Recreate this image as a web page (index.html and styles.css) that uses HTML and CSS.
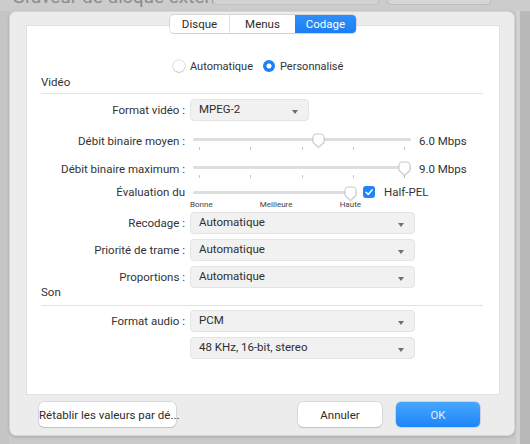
FILE: index.html
```html
<!DOCTYPE html>
<html lang="fr">
<head>
<meta charset="utf-8">
<title>Codage</title>
<link rel="stylesheet" href="styles.css">
</head>
<body>
<div class="screen">
  <div class="behind">
    <span class="bg-title">Graveur de disque externe…</span>
    <span class="bg-field"></span>
    <span class="bg-btn"></span>
  </div>
  <div class="sheet">
    <div class="tabs">
      <div class="tabgroup">
        <span class="tab t1">Disque</span>
        <span class="tab t2">Menus</span>
        <span class="tab t3 active">Codage</span>
      </div>
    </div>
    <div class="panel">
      <div class="radios">
        <span class="radio"></span><span class="rlabel">Automatique</span>
        <span class="radio on"></span><span class="rlabel">Personnalisé</span>
      </div>
      <div class="section">Vidéo</div>
      <div class="sep"></div>

      <div class="row r-format">
        <span class="label">Format vidéo :</span>
        <div class="select short"><span>MPEG-2</span><i class="arrow"></i></div>
      </div>

      <div class="row srow s1">
        <span class="label">Débit binaire moyen :</span>
        <div class="slider wide">
          <div class="track"></div>
          <div class="ticks"><i></i><i></i><i></i><i></i><i></i></div>
          <svg class="thumb" style="left:119px" width="13" height="15" viewBox="0 0 13 15"><path d="M1,4 Q1,1 4,1 H9 Q12,1 12,4 V9 L6.5,14 L1,9 Z" fill="#fff" stroke="#c9c9c9" stroke-width="1"/></svg>
        </div>
        <span class="value">6.0 Mbps</span>
      </div>

      <div class="row srow s2">
        <span class="label">Débit binaire maximum :</span>
        <div class="slider wide">
          <div class="track"></div>
          <div class="ticks"><i></i><i></i><i></i><i></i><i></i></div>
          <svg class="thumb" style="left:205px" width="13" height="15" viewBox="0 0 13 15"><path d="M1,4 Q1,1 4,1 H9 Q12,1 12,4 V9 L6.5,14 L1,9 Z" fill="#fff" stroke="#c9c9c9" stroke-width="1"/></svg>
        </div>
        <span class="value">9.0 Mbps</span>
      </div>

      <div class="row srow s3">
        <span class="label">Évaluation du</span>
        <div class="slider narrow">
          <div class="track"></div>
          <div class="marks"><span>Bonne</span><span>Meilleure</span><span>Haute</span></div>
          <svg class="thumb" style="left:151px" width="13" height="15" viewBox="0 0 13 15"><path d="M1,4 Q1,1 4,1 H9 Q12,1 12,4 V9 L6.5,14 L1,9 Z" fill="#fff" stroke="#c9c9c9" stroke-width="1"/></svg>
        </div>
        <span class="check"><svg width="12" height="12" viewBox="0 0 12 12"><path d="M3,6.2 L5.2,8.4 L9.2,3.8" fill="none" stroke="#fff" stroke-width="1.5" stroke-linecap="round" stroke-linejoin="round"/></svg></span>
        <span class="clabel">Half-PEL</span>
      </div>

      <div class="row r-sel first">
        <span class="label">Recodage :</span>
        <div class="select long"><span>Automatique</span><i class="arrow"></i></div>
      </div>
      <div class="row r-sel">
        <span class="label">Priorité de trame :</span>
        <div class="select long"><span>Automatique</span><i class="arrow"></i></div>
      </div>
      <div class="row r-sel">
        <span class="label">Proportions :</span>
        <div class="select long"><span>Automatique</span><i class="arrow"></i></div>
      </div>

      <div class="section son">Son</div>
      <div class="sep sep2"></div>

      <div class="row r-sel audio">
        <span class="label">Format audio :</span>
        <div class="select long"><span>PCM</span><i class="arrow"></i></div>
      </div>
      <div class="row r-sel">
        <span class="label"></span>
        <div class="select long"><span>48 KHz, 16-bit, stereo</span><i class="arrow"></i></div>
      </div>
    </div>
    <div class="buttons">
      <button class="btn reset">Rétablir les valeurs par dé...</button>
      <button class="btn cancel">Annuler</button>
      <button class="btn ok">OK</button>
    </div>
  </div>
</div>
</body>
</html>
```

FILE: styles.css
```css
* { box-sizing: border-box; }
html, body { margin: 0; padding: 0; }
body {
  width: 530px;
  height: 444px;
  overflow: hidden;
  font-family: Roboto, "Noto Sans", "Liberation Sans", sans-serif;
  font-size: 11.5px;
  color: #333;
  background: linear-gradient(to right, #c5c5c5 0, #c5c5c5 9px, #cacaca 9px, #cacaca 516px, #d2d2d2 516px, #d2d2d2 520px, #b9b9b9 520px);
}
.screen { width: 530px; height: 444px; }

.behind {
  height: 11px;
  overflow: hidden;
  display: flex;
  background: #cccccc;
}
.bg-title {
  margin: -13px 0 0 12px;
  font-size: 19px;
  line-height: 20px;
  color: #8c8c8c;
  width: 200px;
  white-space: nowrap;
}
.bg-field {
  margin-left: 1px;
  width: 166px;
  height: 5px;
  background: #d3d3d3;
  border: 1px solid #c3c3c3;
  border-top: 0;
  border-radius: 0 0 4px 4px;
}
.bg-btn {
  margin-left: 8px;
  width: 104px;
  height: 5px;
  background: #d6d6d6;
  border: 1px solid #bdbdbd;
  border-top: 0;
  border-radius: 0 0 4px 4px;
}

.sheet {
  margin-left: 9px;
  width: 506px;
  height: 425px;
  background: #ececec;
  border-radius: 7px;
  border: 1px solid #d6d6d6;
  box-shadow: 0 1px 3px rgba(0,0,0,0.18);
  padding-top: 3px;
}

.tabs {
  position: relative;
  z-index: 1;
  display: flex;
  padding-left: 160px;
  margin-bottom: -8px;
}
.tabgroup {
  display: flex;
  height: 18px;
  background: #fff;
  border-radius: 4px;
  box-shadow: 0 0 0 0.5px rgba(0,0,0,0.18), 0 1px 1px rgba(0,0,0,0.10);
}
.tab {
  display: flex;
  align-items: center;
  justify-content: center;
  height: 18px;
  font-size: 11.5px;
  color: #2b2b2b;
}
.t1 { width: 60px; border-right: 1px solid #e2e2e2; }
.t2 { width: 65px; }
.t3 { width: 61px; }
.tab.active {
  background: linear-gradient(#2f8ffa, #1a7ff5);
  color: #fff;
  border-radius: 0 4px 4px 0;
}

.panel {
  margin: 0 14px 0 16px;
  height: 370px;
  background: #fff;
  border: 1px solid #e0e0e0;
  padding-top: 31px;
}

.radios {
  display: flex;
  align-items: center;
  height: 18px;
  padding-left: 146px;
  font-size: 11px;
}
.radio {
  width: 12px;
  height: 12px;
  border-radius: 50%;
  background: #fff;
  box-shadow: 0 0 0 0.5px rgba(0,0,0,0.22), 0 1px 1px rgba(0,0,0,0.12);
}
.radio.on {
  background: radial-gradient(circle, #fff 0, #fff 2.3px, #1b82f7 2.8px);
  box-shadow: none;
  margin-left: 10px;
}
.rlabel { margin-left: 5px; }

.section {
  height: 15px;
  line-height: 15px;
  padding-left: 14px;
}
.sep {
  margin: 3px 16px 0 14px;
  height: 1px;
  background: #e3e3e3;
}

.row {
  display: flex;
  align-items: center;
}
.label {
  width: 158px;
  margin-right: 5px;
  text-align: right;
  white-space: nowrap;
}

.r-format { margin-top: 5px; height: 22px; }
.r-sel { margin-top: 5px; height: 22px; }
.r-sel.first { margin-top: 1px; }
.r-sel.audio { margin-top: 4px; }

.select {
  position: relative;
  height: 22px;
  background: #f1f1f1;
  border: 1px solid #e4e4e4;
  border-radius: 4px;
  display: flex;
  align-items: center;
  padding: 0 0 2px 8px;
  color: #2e2e2e;
}
.select.short { width: 119px; }
.select.long { width: 225px; }
.arrow {
  position: absolute;
  right: 10px;
  top: 10px;
  width: 0;
  height: 0;
  border-left: 3.5px solid transparent;
  border-right: 3.5px solid transparent;
  border-top: 4px solid #6f6f6f;
}

.srow { align-items: flex-start; }
.srow .label, .srow .value, .srow .clabel { line-height: 16px; }
.s1 { margin-top: 12px; height: 19px; }
.s2 { margin-top: 9px; height: 19px; }
.s3 { margin-top: 6px; height: 25px; }
.s3 .label { line-height: 12px; }

.slider {
  position: relative;
  margin-left: 3px;
  height: 100%;
}
.slider.wide { width: 218px; }
.slider.narrow { width: 164px; }
.track {
  margin-top: 5px;
  height: 3px;
  border-radius: 2px;
  background: #dedede;
}
.ticks {
  display: flex;
  justify-content: space-between;
  padding: 0 6px;
  margin-top: 6px;
}
.ticks i {
  display: block;
  width: 1px;
  height: 3px;
  background: #c6c6c6;
}
.thumb {
  position: absolute;
  top: 0;
  filter: drop-shadow(0 1px 0.6px rgba(0,0,0,0.15));
}
.marks {
  display: flex;
  justify-content: space-between;
  margin: 6px 0 0 -3px;
  width: 171px;
  font-size: 8px;
  line-height: 10px;
  color: #444;
}
.value { margin-left: 8px; }

.check {
  margin: 0 0 0 6px;
  width: 12px;
  height: 12px;
  border-radius: 3px;
  background: #1e84f8;
  display: flex;
}
.clabel { margin-left: 9px; margin-top: -2px; }

.son { margin-top: -3px; height: 14px; line-height: 14px; }
.sep2 { margin-top: 6px; }

.buttons {
  display: flex;
  margin-top: 7px;
  padding: 0 34px 0 29px;
}
.btn {
  height: 25px;
  border: 0;
  border-radius: 5px;
  background: #fff;
  font-family: inherit;
  font-size: 11.5px;
  color: #2c2c2c;
  box-shadow: 0 0 0 0.5px rgba(0,0,0,0.16), 0 1px 1px rgba(0,0,0,0.12);
  padding: 0;
  white-space: nowrap;
}
.reset { width: 137px; }
.cancel { width: 84px; margin-left: auto; }
.ok {
  width: 84px;
  margin-left: 14px;
  background: linear-gradient(#48a7fd, #1c86f8);
  color: rgba(255,255,255,0.88);
  box-shadow: 0 0 0 0.5px rgba(0,80,200,0.3);
}
```
